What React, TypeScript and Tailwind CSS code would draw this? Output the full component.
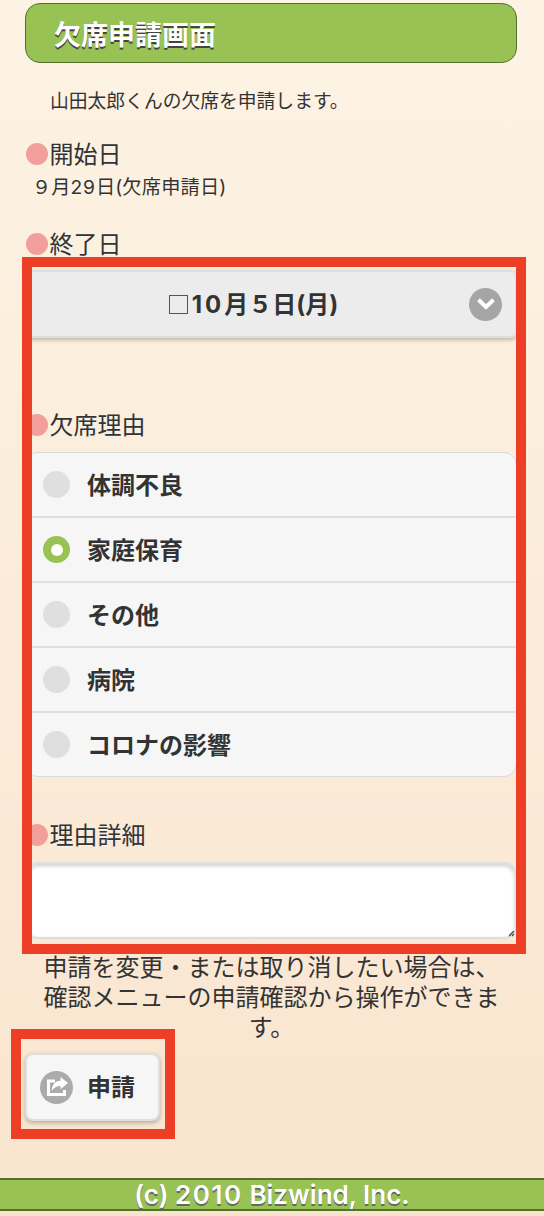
import type { ReactNode } from "react";

const reasons = [
  { label: "体調不良", height: "h-[65px]" },
  { label: "家庭保育", height: "h-[65px]" },
  { label: "その他", height: "h-[65px]" },
  { label: "病院", height: "h-[65px]" },
  { label: "コロナの影響", height: "h-[63px]" },
];

function SectionLabel({ children }: { children: ReactNode }) {
  return (
    <div className="flex h-8 items-center pl-[26px] text-[24px] leading-8">
      <span className="mr-[1.5px] size-[22px] shrink-0 rounded-full bg-[#f29e9b]" />
      <span className="pt-px [text-shadow:0_1px_0_#f3f3f3]">{children}</span>
    </div>
  );
}

function Radio({ checked }: { checked: boolean }) {
  return (
    <span
      className={
        checked
          ? "flex size-[27px] items-center justify-center rounded-full bg-[#98c254]"
          : "size-[27px] rounded-full bg-[#dfdfdf]"
      }
    >
      {checked && <span className="size-3 rounded-full bg-white" />}
    </span>
  );
}

export default function App() {
  return (
    <div className="flex h-[1216px] w-[544px] flex-col overflow-hidden bg-linear-to-b from-[#fdf3e4] to-[#f9e5cf] pt-[3px] font-['Inter','Noto_Sans_CJK_JP',sans-serif] text-[#333]">
      <h1 className="ml-[25px] flex h-[60px] w-[492px] items-center rounded-[15px] border border-[#56702c] bg-[#98c254] pt-[6px] pl-7 text-[27px] font-bold text-white [text-shadow:0_2px_0_#444]">
        欠席申請画面
      </h1>
      <p className="mt-[23px] h-8 pl-[50px] text-[18.8px] leading-8">山田太郎くんの欠席を申請します。</p>
      <div className="mt-5">
        <SectionLabel>開始日</SectionLabel>
      </div>
      <p className="h-8 pt-px pl-8 text-[19.2px] leading-8">
        ９月<span className="tracking-[1px]">29</span>日<span className="tracking-[0.2px]">(欠席申請日)</span>
      </p>
      <div className="mt-[26px]">
        <SectionLabel>終了日</SectionLabel>
      </div>

      <div className="relative h-[690px] pt-[10px]">
        <div className="ml-[25px] flex h-[68px] w-[492px] items-center rounded-md border-2 border-[#dfdfdf] bg-[#ececec] pr-[13px] shadow-[0_2px_4px_rgba(0,0,0,0.25)]">
          <span className="flex flex-1 items-center justify-center text-[24px] font-bold">
            <span className="mr-[4px] ml-[11px] size-[19px] border border-[#555]" />
            <span className="pt-px">
              <span className="tracking-[3px]">10</span>月５日(月)
            </span>
          </span>
          <span className="flex size-[33px] items-center justify-center rounded-full bg-[#a5a5a5]">
            <svg width="18" height="12" viewBox="0 0 18 12" fill="none" stroke="#fff" strokeWidth="4">
              <path d="M1.500 1.800 9 9l7.500-7.200" />
            </svg>
          </span>
        </div>

        <div className="mt-[71px]">
          <SectionLabel>欠席理由</SectionLabel>
        </div>
        <div className="mt-[11px] ml-[25px] w-[492px] divide-y-2 divide-[#dfdfdf] overflow-hidden rounded-[13px] border border-[#d9d9d9] bg-[#f6f6f6]">
          {reasons.map(({ label, height }) => (
            <label key={label} className={`flex items-center gap-[17px] pl-[17px] text-[24px] font-bold ${height}`}>
              <Radio checked={label === "家庭保育"} />
              <span className="pt-[2px]">{label}</span>
            </label>
          ))}
        </div>

        <div className="mt-[42px]">
          <SectionLabel>理由詳細</SectionLabel>
        </div>
        <div className="mt-[11px] ml-[25px] flex h-[77px] w-[492px] items-end justify-end rounded-[13px] border-2 border-[#dedede] bg-white shadow-[inset_0_2px_4px_rgba(0,0,0,0.2)]">
          <svg width="6" height="6" viewBox="0 0 6 6" stroke="#444" strokeWidth="1.300">
            <path d="M0 5 5 0M3 5l2-2" />
          </svg>
        </div>
        <div className="absolute -top-[3px] left-[22px] h-[697px] w-[504px] border-10 border-[#ec3f26]" />
      </div>

      <p className="h-[90px] pt-[3px] pr-px text-center text-[24px] leading-[30px]">
        申請を変更・または取り消したい場合は、
        <br />
        確認メニューの申請確認から操作ができま
        <br />
        す。
      </p>

      <div className="relative mt-[13px] h-[68px]">
        <button className="ml-[25px] flex h-[68px] w-[135px] items-center gap-3.5 rounded-lg border-2 border-[#dfdfdf] bg-[#f6f6f6] pl-[13px] text-[24px] font-bold shadow-[0_2px_4px_rgba(0,0,0,0.25)]">
          <span className="flex size-[33px] items-center justify-center rounded-full bg-[#ababab]">
            <svg width="22" height="20" viewBox="0 0 22 20" fill="none">
              <path d="M9 4H2.500v13.500h16V13" stroke="#fff" strokeWidth="3" />
              <path d="M14.500 0v3.700C9 4 6 7.500 5.700 14 8 10.500 10.500 9 14.500 9v3.300L22 6z" fill="#fff" />
            </svg>
          </span>
          <span className="pt-px">申請</span>
        </button>
        <div className="absolute -top-6 left-[11px] h-[110px] w-[164px] border-10 border-[#ec3f26]" />
      </div>

      <footer className="mt-[57px] flex h-[33px] items-center justify-center border-y-2 border-[#56702c] bg-[#98c254] text-[26px] font-semibold text-white [text-shadow:0_2px_0_#666]">
        <span className="whitespace-pre">
          (c) <span className="tracking-[1.6px]">2010</span> Bizwind, Inc.
        </span>
      </footer>
    </div>
  );
}
